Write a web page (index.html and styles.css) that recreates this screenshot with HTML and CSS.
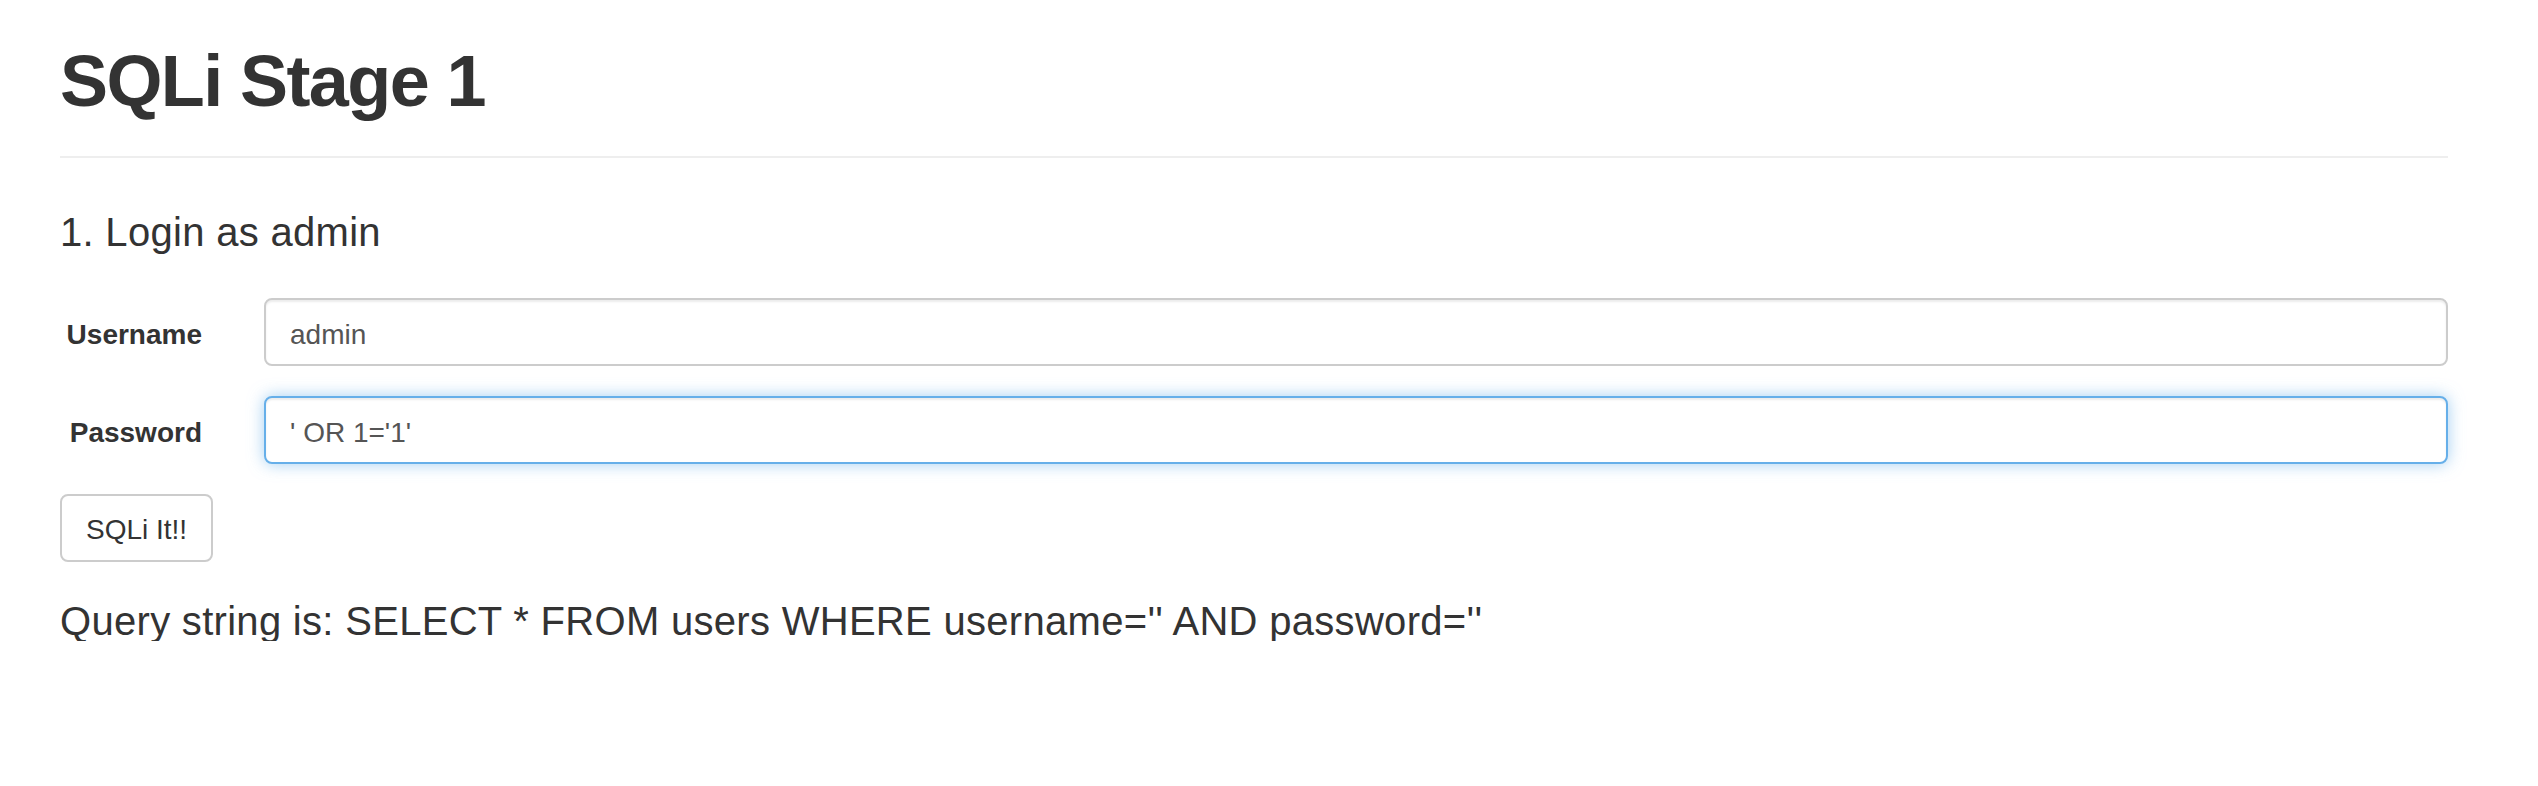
FILE: index.html
```html
<!DOCTYPE html>
<html>
<head>
<meta charset="utf-8">
<title>SQLi Stage 1</title>
<link rel="stylesheet" href="styles.css">
</head>
<body>
<div class="container">
  <h1 class="title">SQLi Stage 1</h1>
  <hr class="divider">
  <h4 class="subtitle">1. Login as admin</h4>
  <form class="form">
    <div class="form-row">
      <label class="form-label">Username</label>
      <input class="form-input" type="text" value="admin">
    </div>
    <div class="form-row">
      <label class="form-label">Password</label>
      <input class="form-input is-focused" type="text" value="' OR 1='1'">
    </div>
    <button class="btn" type="button">SQLi It!!</button>
  </form>
  <p class="query">Query string is: SELECT * FROM users WHERE username='' AND password=''</p>
</div>
</body>
</html>
```
FILE: styles.css
```css
html, body {
  margin: 0;
  padding: 0;
  background: #fff;
}
body {
  font-family: "Liberation Sans", Arial, sans-serif;
  color: #333;
}
.container {
  padding: 0 90px 0 60px;
}
.title {
  margin: 41px 0 0 0;
  font-size: 72px;
  line-height: 80px;
  font-weight: 700;
  letter-spacing: -1.6px;
  color: #333;
}
.divider {
  margin: 35px 0 0 0;
  border: 0;
  border-top: 2px solid #eee;
  height: 0;
}
.subtitle {
  margin: 54px 0 0 0;
  font-size: 40px;
  line-height: 40px;
  font-weight: 400;
  letter-spacing: 0.3px;
  color: #333;
}
.form {
  margin-top: 46px;
  display: flex;
  flex-direction: column;
  align-items: flex-start;
  gap: 30px;
}
.form-row {
  display: flex;
  align-items: center;
  gap: 62px;
  width: 100%;
}
.form-label {
  width: 142px;
  flex: none;
  box-sizing: border-box;
  padding-top: 5px;
  text-align: right;
  font-size: 28px;
  line-height: 40px;
  font-weight: 700;
  color: #333;
}
.form-input {
  flex: 1;
  min-width: 0;
  box-sizing: border-box;
  height: 68px;
  padding: 5px 24px 0 24px;
  border: 2px solid #ccc;
  border-radius: 8px;
  background: #fff;
  font-family: "Liberation Sans", Arial, sans-serif;
  font-size: 28px;
  color: #555;
  box-shadow: inset 0 2px 2px rgba(0, 0, 0, 0.075);
  outline: none;
}
.form-input.is-focused {
  border-color: #66afe9;
  box-shadow: inset 0 2px 2px rgba(0, 0, 0, 0.075), 0 0 16px rgba(102, 175, 233, 0.6);
}
.btn {
  box-sizing: border-box;
  height: 68px;
  padding: 4px 24px 0 24px;
  border: 2px solid #ccc;
  border-radius: 8px;
  background: #fff;
  font-family: "Liberation Sans", Arial, sans-serif;
  font-size: 28px;
  color: #333;
  cursor: pointer;
}
.query {
  margin: 39px 0 0 0;
  font-size: 40px;
  line-height: 40px;
  letter-spacing: 0.3px;
  color: #333;
}
```
